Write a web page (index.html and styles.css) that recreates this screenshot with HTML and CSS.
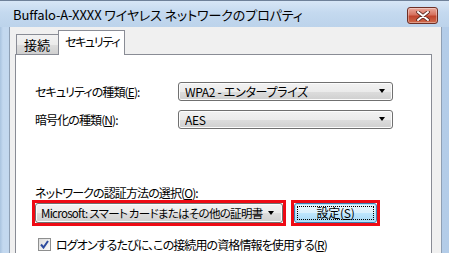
FILE: index.html
```html
<!DOCTYPE html>
<html lang="ja">
<head>
<meta charset="utf-8">
<link rel="stylesheet" href="styles.css">
</head>
<body>
<div class="window">
  <div class="titlebar">
    <span class="title">Buffalo-A-XXXX ワイヤレス ネットワークのプロパティ</span>
    <span class="close"><svg width="14" height="10" viewBox="0 0 14 10"><path d="M2 1 L12 9 M12 1 L2 9" stroke="#5a2a22" stroke-width="3.6" stroke-linecap="round"/><path d="M2 1 L12 9 M12 1 L2 9" stroke="#fff" stroke-width="2" stroke-linecap="round"/></svg></span>
  </div>
  <div class="client">
    <div class="tabs">
      <div class="tab">接続</div>
      <div class="tab active">セキュリティ</div>
    </div>
    <div class="panel">
      <div class="row">
        <span class="label">セキュリティの種類(<u>E</u>):</span>
        <span class="combo wide"><span class="value">WPA2 - エンタープライズ</span><i class="arrow"></i></span>
      </div>
      <div class="row">
        <span class="label">暗号化の種類(<u>N</u>):</span>
        <span class="combo wide"><span class="value">AES</span><i class="arrow"></i></span>
      </div>
      <div class="label auth">ネットワークの認証方法の選択(<u>O</u>):</div>
      <div class="authrow">
        <span class="redbox"><span class="combo method"><span class="value">Microsoft: スマート カードまたはその他の証明書</span><i class="arrow"></i></span></span>
        <span class="redbox"><span class="button"><span class="focus">設定(<u>S</u>)</span></span></span>
      </div>
      <div class="check">
        <span class="box"><svg width="9" height="9" viewBox="0 0 9 9"><path d="M1 4.5 L3.5 7.5 L8 1" fill="none" stroke="#2c4a9e" stroke-width="2"/></svg></span>
        <span>ログオンするたびに、この接続用の資格情報を使用する(<u>R</u>)</span>
      </div>
    </div>
  </div>
</div>
</body>
</html>
```
FILE: styles.css
```css
html, body {
  margin: 0;
  padding: 0;
}
body {
  width: 449px;
  height: 253px;
  overflow: hidden;
  font-family: "Noto Sans CJK JP", "Noto Sans", sans-serif;
  font-size: 12px;
  font-feature-settings: "palt" 1;
  letter-spacing: -0.9px;
  color: #000;
  white-space: nowrap;
}
.window {
  width: 449px;
  height: 253px;
  box-sizing: border-box;
  display: flex;
  flex-direction: column;
  padding: 0 7px 0 9px;
  background: linear-gradient(90deg, #a9c3df 0px, #c3d8ef 3px, #bed4ec 60%, #b3cce8 100%);
  border-top: 1px solid #6f8199;
}
.titlebar {
  height: 29px;
  display: flex;
  align-items: center;
  justify-content: space-between;
  background: linear-gradient(180deg, #d7e6f6 0%, #c4d9ef 45%, #bcd3eb 100%);
  margin: 0 -7px 0 -9px;
  padding: 0 11px 0 13px;
}
.title {
  font-size: 13px;
  letter-spacing: -0.1px;
  color: #000;
  margin-top: 1px;
}
.close {
  width: 29px;
  height: 15px;
  margin-top: 3px;
  border: 1px solid #6d2f26;
  border-radius: 3px;
  background: linear-gradient(180deg, #e9a99c 0%, #d7725f 45%, #c0442d 55%, #cf6a4c 100%);
  display: flex;
  align-items: center;
  justify-content: center;
  box-shadow: inset 0 0 0 1px rgba(255,255,255,0.35);
}
.client {
  flex: 1;
  background: #f0f0f0;
  border-left: 1px solid #8e9fb4;
  border-right: 1px solid #8e9fb4;
  padding: 3px 9px 0 5px;
  display: flex;
  flex-direction: column;
}
.tabs {
  display: flex;
  align-items: flex-end;
  height: 24px;
  padding-left: 1px;
  position: relative;
  z-index: 1;
}
.tab {
  height: 20px;
  box-sizing: border-box;
  padding: 0 8px 0 7px;
  border: 1px solid #898c95;
  border-bottom: none;
  background: linear-gradient(180deg, #f2f2f2 0%, #ebebeb 50%, #dddddd 51%, #cfcfcf 100%);
  line-height: 20px;
  font-size: 13px;
  letter-spacing: 0;
  display: flex;
  align-items: center;
}
.tab.active {
  height: 25px;
  margin-left: -1px;
  margin-bottom: -1px;
  background: #fff;
  padding: 0 5px 3px 6px;
  font-size: 12px;
  letter-spacing: -1.3px;
}
.panel {
  flex: 1;
  background: #fff;
  border: 1px solid #898c95;
  border-bottom: none;
  padding: 26px 0 0 16px;
  display: flex;
  flex-direction: column;
}
.row {
  display: flex;
  align-items: center;
  height: 20px;
  margin-bottom: 8px;
}
.label {
  margin-left: 3px;
  width: 143px;
}
.combo {
  box-sizing: border-box;
  height: 19px;
  border: 1px solid #707070;
  border-radius: 3px;
  background: linear-gradient(180deg, #f2f2f2 0%, #ebebeb 50%, #dddddd 51%, #cfcfcf 100%);
  display: flex;
  align-items: center;
  justify-content: space-between;
  padding: 0 5px 0 4px;
  box-shadow: inset 0 0 0 1px #fcfcfc;
}
.value {
  min-width: 0;
  overflow: hidden;
}
.combo.wide {
  width: 215px;
  padding-left: 6px;
  letter-spacing: -0.3px;
}
.arrow {
  flex: none;
  width: 0;
  height: 0;
  border-left: 3.5px solid transparent;
  border-right: 3.5px solid transparent;
  border-top: 4px solid #000;
  margin-right: 2px;
  margin-left: 4px;
}
.label.auth {
  width: auto;
  margin-top: 49px;
  line-height: 14px;
}
.authrow {
  display: flex;
  margin-top: 0;
}
.redbox {
  border: 3px solid #ee0a14;
  display: flex;
}
.redbox + .redbox {
  margin-left: 5px;
}
.combo.method {
  width: 248px;
  height: 20px;
  padding-left: 5px;
  padding-right: 6px;
  font-size: 11.5px;
  letter-spacing: -0.7px;
}
.button {
  box-sizing: border-box;
  width: 83px;
  height: 20px;
  border: 1px solid #3c7fb1;
  border-radius: 3px;
  background: linear-gradient(180deg, #eaf6fd 0%, #d9f0fc 50%, #bee6fd 51%, #a7d9f5 100%);
  display: flex;
  padding: 2px;
  box-shadow: inset 0 0 0 1px #b4e3f9;
}
.focus {
  flex: 1;
  border: 1px dotted #000;
  display: flex;
  align-items: center;
  justify-content: center;
  line-height: 14px;
  letter-spacing: -0.3px;
}
.check {
  display: flex;
  align-items: center;
  margin-top: 10px;
  margin-left: 6px;
}
.box {
  box-sizing: border-box;
  width: 13px;
  height: 13px;
  border: 1px solid #8e8f8f;
  background: linear-gradient(135deg, #dcdcdc, #fafafa);
  display: flex;
  align-items: center;
  justify-content: center;
  margin-right: 5px;
}
u {
  text-decoration: underline;
  text-underline-offset: 1px;
}
```
